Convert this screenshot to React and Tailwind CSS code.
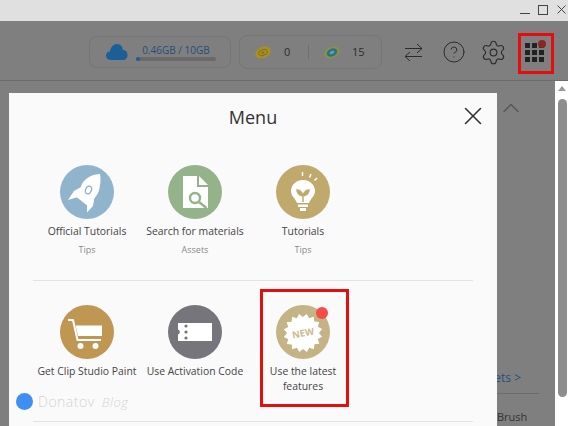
import { X, CircleHelp, Settings, ChevronUp } from 'lucide-react'

function Circle({ color, badge, children }) {
  return (
    <div className={`relative w-[54px] h-[54px] rounded-full flex items-center justify-center ${color}`}>
      <svg width="54" height="54" viewBox="0 0 54 54">{children}</svg>
      {badge && <div className="absolute top-[2px] right-[2px] w-[12px] h-[12px] rounded-full bg-[#f44b4b]" />}
    </div>
  )
}

function MenuItem({ color, badge, icon, label, sub }) {
  return (
    <div className="flex flex-col items-center w-[108px]">
      <Circle color={color} badge={badge}>{icon}</Circle>
      <div className="mt-[5px] text-[10.4px] leading-[15px] text-[#444] text-center whitespace-pre-line">{label}</div>
      {sub && <div className="mt-[5px] text-[9px] leading-[12px] text-[#8a8a8a]">{sub}</div>}
    </div>
  )
}

const rocket = (
  <g fill="#fff">
    <path d="M40 9 C33 9 25 13 22 19 L16.5 32 L26.5 40 C33 36 39 29 39.5 23 C40.5 18 41 13 40 9 Z" />
    <path d="M21 22 L14 26 L8 35 L18 32 Z" />
    <path d="M27 39 L27 47.5 L33 41 L34.5 32 Z" />
    <ellipse cx="28.5" cy="25" rx="3.6" ry="4.8" fill="#8fb4cb" transform="rotate(25 28.5 25)" />
    <ellipse cx="28.5" cy="25" rx="2.2" ry="3.4" transform="rotate(25 28.5 25)" />
  </g>
)

const fileSearch = (
  <g>
    <path d="M15 11 H29 V22 H40 V43 H15 Z" fill="#fff" />
    <path d="M31 11 L40 20 H31 Z" fill="#fff" />
    <circle cx="27" cy="33" r="5" fill="none" stroke="#95b38a" strokeWidth="2.4" />
    <path d="M31 37 L38.5 43" stroke="#95b38a" strokeWidth="2.4" />
  </g>
)

const bulb = (
  <g>
    <path d="M27 15 C19 15 15 21 15 26 C15 31 19 33 21 38 H33 C35 33 39 31 39 26 C39 21 35 15 27 15 Z" fill="#fff" />
    <path d="M22 39.5 H32 V42 H22 Z M24 43 H30 V46 H24 Z" fill="#fff" />
    <path d="M27 37 V29 M27 30 C25 26 23 25 21 25 C21 28 23 30 27 31 M27 30 C29 26 31 25 33 25 C33 28 31 30 27 31" fill="#c0a96d" stroke="#c0a96d" strokeWidth="1.5" />
    <path d="M26.5 7 V11 M35 9 L33.5 12.5 M41 13 L38.5 15.5" stroke="#fff" strokeWidth="1.5" />
  </g>
)

const cart = (
  <g>
    <path d="M8 15 H13 L17.5 35 H41" fill="none" stroke="#fff" strokeWidth="2" />
    <path d="M15.5 20.5 H42 V31 H18 Z" fill="#fff" />
    <circle cx="20.5" cy="41" r="3" fill="#fff" />
    <circle cx="35.5" cy="41" r="3" fill="#fff" />
  </g>
)

const ticket = (
  <g>
    <path d="M10 18 H44 V36 H10 V29.5 A2.6 2.6 0 0 0 10 24.5 Z" fill="#fff" />
    <circle cx="18" cy="21" r="1.6" fill="#75757b" />
    <circle cx="18" cy="27" r="1.6" fill="#75757b" />
    <circle cx="18" cy="33" r="1.6" fill="#75757b" />
  </g>
)

// 16 point burst behind the NEW label
const burstPoints = Array.from({ length: 32 }, (_, i) => {
  const r = i % 2 === 0 ? 19.5 : 16
  const a = (i / 32) * Math.PI * 2 - 0.2
  return `${(27 + r * Math.cos(a)).toFixed(1)},${(28 + r * Math.sin(a)).toFixed(1)}`
}).join(' ')

const burst = (
  <g>
    <polygon points={burstPoints} fill="#fff" />
    <text x="27" y="31.5" textAnchor="middle" transform="rotate(-10 27 28)" fontSize="9.5" fontWeight="700" fill="#c9ba8f" style={{ fontFamily: '"Open Sans", sans-serif' }}>NEW</text>
  </g>
)

export default function App() {
  return (
    <div className="relative w-[568px] h-[426px] overflow-hidden bg-[#7f7f7f] flex flex-col" style={{ fontFamily: '"Open Sans", sans-serif' }}>
      {/* Title bar */}
      <div className="h-[21px] shrink-0 bg-[#e0e0e0] flex items-start justify-end pr-[2px] pt-[5px]">
        <div className="mt-[8px] w-[10px] h-px bg-[#444]" />
        <div className="ml-[8px] w-[10px] h-[10px] border border-[#444]" />
        <svg className="ml-[9px]" width="9" height="9" viewBox="0 0 9 9">
          <path d="M0.5 0.5 L8.5 8.5 M8.5 0.5 L0.5 8.5" stroke="#444" strokeWidth="1" />
        </svg>
      </div>

      {/* Toolbar */}
      <div className="h-[60px] shrink-0 border-b border-[#6c6c6c] flex items-center pl-[89px] pt-[3px]">
        <div className="w-[142px] h-[32px] rounded-[8px] border border-[#757575] flex items-center pl-[16px]">
          <svg width="22" height="16" viewBox="0 0 22 16">
            <path d="M5 16 C1 16 0 13 0 11.5 C0 9 2 7.5 4 7.5 C4.5 4 7 0 11 0 C15 0 16.5 3 17 6 C20 6 21.5 8.5 21.5 11 C21.5 14 19.5 16 17 16 Z" fill="#1c5f96" />
          </svg>
          <div className="ml-[8px] flex flex-col items-center w-[80px]">
            <div className="text-[10px] leading-[12px] text-[#1f4f78]">0.46GB / 10GB</div>
            <div className="mt-[1px] w-[80px] h-[4px] rounded-full bg-[#6a6a6a]">
              <div className="w-[4px] h-[4px] rounded-full bg-[#1c5f96]" />
            </div>
          </div>
        </div>

        <div className="ml-[8px] w-[143px] h-[34px] rounded-[8px] border border-[#757575] flex items-center text-[11px] text-[#2c2c2c]">
          <div className="w-[69px] flex items-center pl-[15px] border-r border-[#6f6f6f] h-[14px]">
            <svg width="16" height="13" viewBox="0 0 16 13">
              <ellipse cx="8" cy="6.5" rx="8" ry="5.6" fill="#a89022" transform="rotate(-25 8 6.5)" />
              <ellipse cx="8" cy="6.5" rx="4.5" ry="2.8" fill="none" stroke="#86711c" strokeWidth="1" transform="rotate(-25 8 6.5)" />
              <ellipse cx="8" cy="6.5" rx="1.6" ry="1" fill="#86711c" transform="rotate(-25 8 6.5)" />
            </svg>
            <span className="ml-[13px]">0</span>
          </div>
          <div className="flex items-center pl-[15px]">
            <svg width="16" height="13" viewBox="0 0 16 13">
              <ellipse cx="8" cy="6.5" rx="8" ry="5.6" fill="#8a9440" transform="rotate(-25 8 6.5)" />
              <ellipse cx="8" cy="6.5" rx="5.6" ry="3.8" fill="#2f6f84" transform="rotate(-25 8 6.5)" />
              <ellipse cx="8" cy="6.5" rx="2.6" ry="1.6" fill="#59a0ad" transform="rotate(-25 8 6.5)" />
            </svg>
            <span className="ml-[12px]">15</span>
          </div>
        </div>

        <svg className="ml-[22px] text-[#2c2c2c]" width="19" height="19" viewBox="0 0 19 19" fill="none" stroke="currentColor" strokeWidth="1">
          <path d="M1 5.5 H18 M13 1 L18 5.5 L13 10" />
          <path d="M18 13.5 H1 M6 9 L1 13.5 L6 18" />
        </svg>
        <CircleHelp size={24} strokeWidth={1} className="ml-[19px] text-[#2c2c2c]" />
        <Settings size={27} strokeWidth={1} className="ml-[14px] text-[#2c2c2c]" />
        <div className="relative ml-[11px] mt-[3px] w-[36px] h-[41px] border-[3px] border-[#e50d0d] flex items-center justify-center">
          <div className="grid grid-cols-3 gap-[2px] mr-[3px] mb-[2px]">
            {[0, 1, 2, 3, 4, 5, 6, 7, 8].map(i => (
              <div key={i} className="w-[5px] h-[5px] bg-[#222]" />
            ))}
          </div>
          <div className="absolute top-[4px] right-[5px] w-[8px] h-[8px] rounded-full bg-[#8e2424]" />
        </div>
      </div>

      {/* Area behind the dialog */}
      <div className="flex-1 relative">
        <ChevronUp size={28} strokeWidth={1.2} className="absolute top-[13px] left-[497px] text-[#555]" />
        <div className="absolute top-[288px] right-[47px] text-[12px] text-[#1f4f78]">ets &gt;</div>
        <div className="absolute top-[312px] left-[468px] w-[71px] h-px bg-[#6c6c6c]" />
        <div className="absolute top-[328px] left-[497px] text-[11px] text-[#333]">Brush</div>
        <div className="absolute top-0 right-0 bottom-0 w-[13px] bg-white flex flex-col items-center pl-px pt-[5px]">
          <div className="w-0 h-0 border-x-[4px] border-x-transparent border-b-[5px] border-b-[#9a9a9a]" />
          <div className="mt-[8px] w-[9px] h-[298px] rounded-full bg-[#8d8d8d]" />
        </div>
      </div>

      {/* Menu dialog */}
      <div className="absolute left-[9px] top-[93px] w-[488px] h-[333px] bg-[#fafafa] px-[24px]">
        <div className="relative h-[47px] pt-px flex items-center justify-center text-[18px] text-[#333]">
          Menu
          <X size={30} strokeWidth={1.3} className="absolute right-[-15px] top-[8px] text-[#333]" />
        </div>
        <div className="flex items-start pt-[25px] h-[141px] border-b border-[#e3e3e3]">
          <MenuItem color="bg-[#8fb4cb]" icon={rocket} label="Official Tutorials" sub="Tips" />
          <MenuItem color="bg-[#95b38a]" icon={fileSearch} label="Search for materials" sub="Assets" />
          <MenuItem color="bg-[#c0a96d]" icon={bulb} label="Tutorials" sub="Tips" />
        </div>
        <div className="flex items-start pt-[24px] h-[141px] border-b border-[#e3e3e3]">
          <MenuItem color="bg-[#bf9753]" icon={cart} label="Get Clip Studio Paint" />
          <MenuItem color="bg-[#75757b]" icon={ticket} label="Use Activation Code" />
          <div className="relative">
            <MenuItem color="bg-[#c4b384]" badge icon={burst} label={'Use the latest\nfeatures'} />
            <div className="absolute left-[11px] top-[-16px] w-[89px] h-[118px] border-[3px] border-[#e50d0d]" />
          </div>
        </div>
        {/* Watermark */}
        <div className="absolute left-[7px] top-[298px] flex items-center gap-[5px]">
          <div className="w-[17px] h-[17px] rounded-full bg-[#3f8ff2]" />
          <span className="text-[14px] font-light text-[#d4d4d4] tracking-[0.5px]">Donatov <span className="ml-[3px] italic text-[13px]">Blog</span></span>
        </div>
      </div>
    </div>
  )
}
